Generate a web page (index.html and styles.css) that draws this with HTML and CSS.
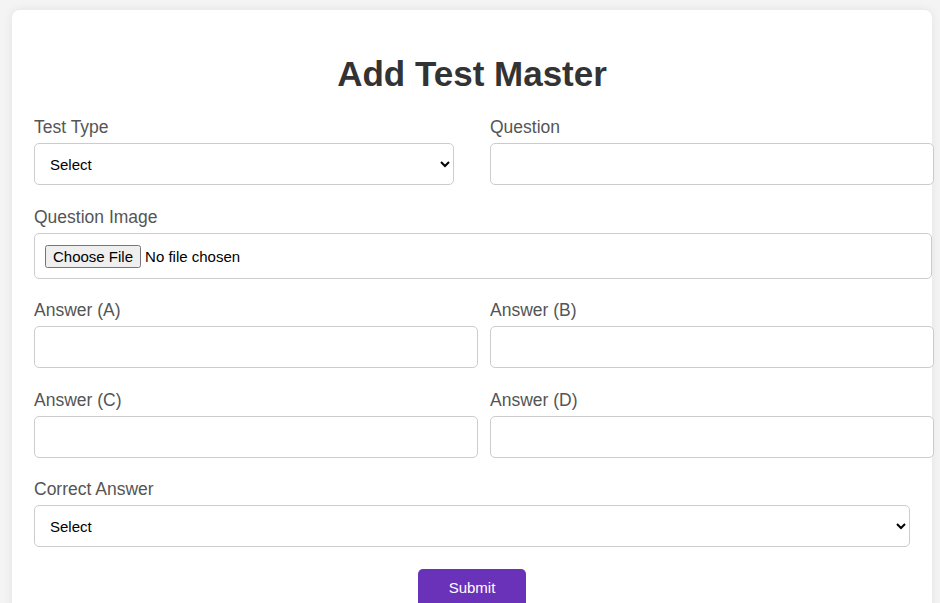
FILE: index.html
```html
<!DOCTYPE html>
<html lang="en">
<head>
<meta charset="utf-8">
<title>Add Test Master</title>
<link rel="stylesheet" href="styles.css">
</head>
<body>
<div class="card">
  <h2 class="title">Add Test Master</h2>
  <form class="form">
    <div class="row">
      <div class="group">
        <label class="label">Test Type</label>
        <select class="select"><option>Select</option></select>
      </div>
      <div class="group">
        <label class="label">Question</label>
        <input class="input" type="text">
      </div>
    </div>
    <div class="group">
      <label class="label">Question Image</label>
      <input class="input file" type="file">
    </div>
    <div class="row">
      <div class="group">
        <label class="label">Answer (A)</label>
        <input class="input" type="text">
      </div>
      <div class="group">
        <label class="label">Answer (B)</label>
        <input class="input" type="text">
      </div>
    </div>
    <div class="row">
      <div class="group">
        <label class="label">Answer (C)</label>
        <input class="input" type="text">
      </div>
      <div class="group">
        <label class="label">Answer (D)</label>
        <input class="input" type="text">
      </div>
    </div>
    <div class="group">
      <label class="label">Correct Answer</label>
      <select class="select"><option>Select</option></select>
    </div>
    <div class="actions">
      <button class="submit" type="button">Submit</button>
    </div>
  </form>
</div>
</body>
</html>
```

FILE: styles.css
```css
html, body {
  margin: 0;
  background: #f4f4f4;
  font-family: "Liberation Sans", Arial, sans-serif;
}
body {
  padding: 10px 8px 0 12px;
  height: 603px;
  box-sizing: border-box;
  overflow: hidden;
}
.card {
  background: #fff;
  border-radius: 8px;
  box-shadow: 0 0 10px rgba(0, 0, 0, 0.08);
  padding: 22px 22px 40px;
}
.title {
  margin: 22px 0 23px;
  text-align: center;
  font-size: 35px;
  line-height: 40px;
  font-weight: bold;
  color: #333;
}
.row {
  display: grid;
  grid-template-columns: 1fr 1fr;
  column-gap: 36px;
}
.group {
  margin-bottom: 21.5px;
  min-width: 0;
}
.label {
  display: block;
  font-size: 17.5px;
  line-height: 20px;
  color: #555;
  margin-bottom: 6px;
}
.input {
  display: block;
  width: 100%;
  box-sizing: content-box;
  padding: 11px;
  border: 1px solid #ccc;
  border-radius: 5px;
  font-family: "Liberation Sans", Arial, sans-serif;
  font-size: 15px;
  line-height: 18px;
  height: 18px;
  background: #fff;
  margin: 0;
}
.file {
  height: 22px;
  line-height: 22px;
  padding: 11px 10px;
}
.select {
  display: block;
  width: 100%;
  box-sizing: border-box;
  height: 42px;
  padding: 0 10px 0 11px;
  border: 1px solid #ccc;
  border-radius: 5px;
  font-family: "Liberation Sans", Arial, sans-serif;
  font-size: 15px;
  color: #000;
  background: #fff;
  margin: 0;
}
.actions {
  display: flex;
  justify-content: center;
  margin-top: 1px;
}
.submit {
  background: #6a32b8;
  color: #fff;
  border: none;
  border-radius: 5px;
  padding: 10px 31px 14px;
  font-family: "Liberation Sans", Arial, sans-serif;
  font-size: 15px;
  line-height: 18px;
}
```
